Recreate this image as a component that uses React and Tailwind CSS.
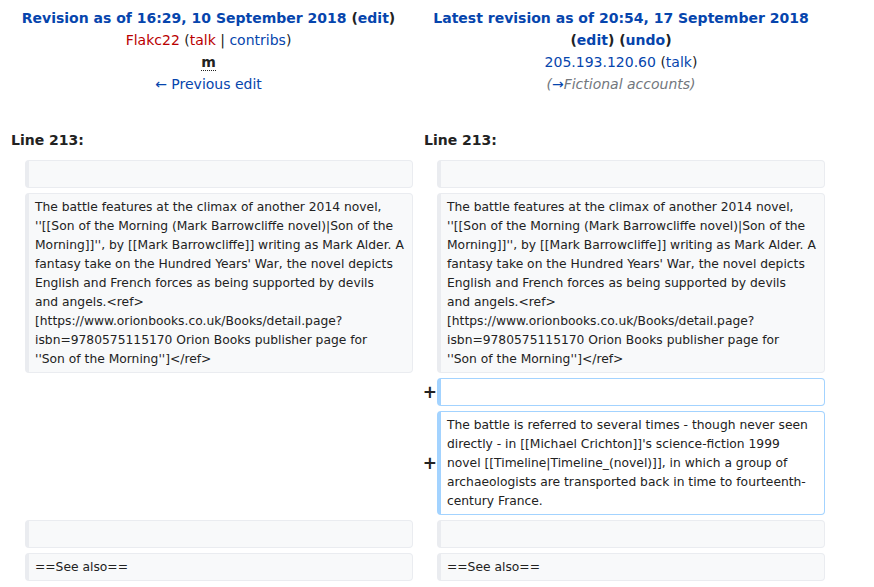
import React from 'react';

const font = { fontFamily: '"DejaVu Sans", sans-serif' };

const Link = ({ children, red, className = '' }) => (
  <a className={`${red ? 'text-[#ba0000]' : 'text-[#0645ad]'} no-underline ${className}`}>{children}</a>
);

// lines are kept as they wrap in the original diff view
const Box = ({ added, lines }) => (
  <div
    className={`rounded-[4px] border border-l-4 pl-[6px] pr-[6px] pt-[4px] pb-[3px] text-[12.3px] leading-[19px] text-[#222] ${
      added ? 'border-[#a3d3ff] bg-white' : 'border-[#eaecf0] bg-[#f8f9fa]'
    }`}
  >
    {lines ? lines.map((l, i) => <div key={i} className="whitespace-nowrap">{l}</div>) : '\u00a0'}
  </div>
);

const Marker = () => (
  <div className="-mr-[4px] flex items-center justify-end text-[17px] font-bold leading-none text-[#222]">+</div>
);

const oldLines = [
  'The battle features at the climax of another 2014 novel,',
  "''[[Son of the Morning (Mark Barrowcliffe novel)|Son of the",
  "Morning]]'', by [[Mark Barrowcliffe]] writing as Mark Alder. A",
  "fantasy take on the Hundred Years' War, the novel depicts",
  'English and French forces as being supported by devils',
  'and angels.<ref>',
  '[https://www.orionbooks.co.uk/Books/detail.page?',
  'isbn=9780575115170 Orion Books publisher page for',
  "''Son of the Morning'']</ref>",
];

const addedLines = [
  'The battle is referred to several times - though never seen',
  "directly - in [[Michael Crichton]]'s science-fiction 1999",
  'novel [[Timeline|Timeline_(novel)]], in which a group of',
  'archaeologists are transported back in time to fourteenth-',
  'century France.',
];

export default function App() {
  return (
    <div className="min-h-[587px] w-[874px] bg-white text-[#222]" style={font}>
      <div className="grid grid-cols-[17px_388px_16px_388px] gap-x-[4px] pl-[4px]">
        <div className="col-span-2 pt-[7px] text-center text-[14px] leading-[22px]">
          <div className="font-bold">
            <Link>Revision as of 16:29, 10 September 2018</Link> (<Link>edit</Link>)
          </div>
          <div>
            <Link red>Flakc22</Link> (<Link red>talk</Link> | <Link>contribs</Link>)
          </div>
          <div>
            <abbr className="border-b border-dotted border-[#222] font-bold no-underline">m</abbr>
          </div>
          <div>
            <Link>← Previous edit</Link>
          </div>
        </div>
        <div className="col-span-2 pt-[7px] text-center text-[14px] leading-[22px]">
          <div className="font-bold">
            <Link>Latest revision as of 20:54, 17 September 2018</Link>
          </div>
          <div className="font-bold">
            (<Link>edit</Link>) (<Link>undo</Link>)
          </div>
          <div>
            <Link>205.193.120.60</Link> (<Link>talk</Link>)
          </div>
          <div className="italic text-[#72777d]">
            (<Link className="not-italic">→</Link>Fictional accounts)
          </div>
        </div>

        <div className="col-span-2 mt-[34px] pl-[7px] text-[14px] font-bold leading-[22px]">Line 213:</div>
        <div className="col-span-2 mt-[34px] pl-[7px] text-[14px] font-bold leading-[22px]">Line 213:</div>
      </div>

      <div className="mt-[9px] grid grid-cols-[17px_388px_16px_388px] gap-x-[4px] gap-y-[5px] pl-[4px]">
        <div />
        <Box />
        <div />
        <Box />

        <div />
        <Box lines={oldLines} />
        <div />
        <Box lines={oldLines} />

        <div className="col-span-2" />
        <Marker />
        <Box added />

        <div className="col-span-2" />
        <Marker />
        <Box added lines={addedLines} />

        <div />
        <Box />
        <div />
        <Box />

        <div />
        <Box lines={['==See also==']} />
        <div />
        <Box lines={['==See also==']} />
      </div>
    </div>
  );
}
